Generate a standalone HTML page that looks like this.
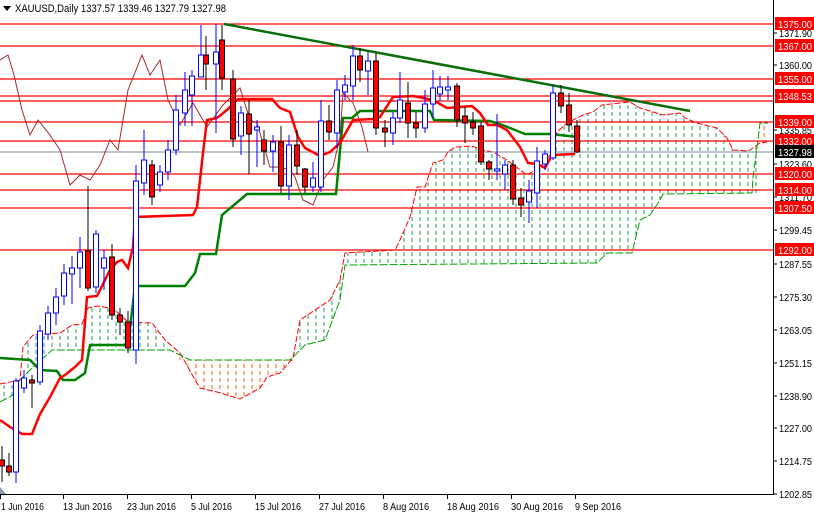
<!DOCTYPE html>
<html><head><meta charset="utf-8"><style>
html,body{margin:0;padding:0;background:#fff;}
svg{display:block;font-family:"Liberation Sans",sans-serif;}
.ax{font-size:10px;fill:#000;}
.lb{font-size:10px;fill:#fff;}
</style></head><body>
<svg width="814" height="514" viewBox="0 0 814 514" xmlns="http://www.w3.org/2000/svg">
<defs>
<pattern id="pg" width="8" height="7" patternUnits="userSpaceOnUse"><line x1="4" y1="0" x2="4" y2="4" stroke="#1fa050" stroke-width="1"/></pattern>
<pattern id="po" width="8" height="7" patternUnits="userSpaceOnUse"><line x1="4" y1="0" x2="4" y2="4" stroke="#ff6000" stroke-width="1"/></pattern>
</defs>
<rect width="814" height="514" fill="#fff"/>
<polygon fill="url(#pg)" points="0,384 20,380 23,347 33,335 60,333 72,325 82,324 88,308 97,306 110,308 115,310 128,322 152,323 165,345 170,350 52,350 30,370 20,380 13,395 0,402"/>
<polygon fill="url(#po)" points="175,360 180,353 195,380 200,388 217,392 240,399 260,388 267,377 280,373 290,362 295,360"/>
<polygon fill="url(#pg)" points="293,358 300,320 330,300 340,280 345,253 395,250 400,240 410,217 417,187 425,187 433,163 443,160 448,152 455,147 472,146 483,150 493,152 507,160 527,175 540,167 550,155 557,132 567,123 583,115 593,112 602,105 620,103 630,102 640,108 653,112 663,115 680,113 685,118 697,123 717,128 727,138 733,150 748,151 753,148 760,143 760,193 663,194 660,200 650,215 640,220 632,253 607,253 597,263 345,265 340,300 325,340 305,345"/>
<polygon fill="url(#po)" points="760,123 768,123 768,142 760,143"/>
<polyline fill="none" stroke="#f00" stroke-width="1" points="0,384 20,380 23,347 33,335 60,333 72,325 82,324 88,308 97,306 110,308 115,310 128,322 152,323 165,340 180,353 195,380 200,388 217,392 240,399 260,388 267,377 280,373 293,358 300,320 330,300 340,280 345,253 395,250 400,240 410,217 417,187 425,187 433,163 443,160 448,152 455,147 472,146 483,150 493,152 507,160 527,175 540,167 550,155 557,132 567,123 583,115 593,112 602,105 620,103 630,102 640,108 653,112 663,115 680,113 685,118 697,123 717,128 727,138 733,150 748,151 753,148 760,143 767,142" stroke-dasharray="6,2"/>
<polyline fill="none" stroke="#00a000" stroke-width="1" points="0,402 13,395 20,380 30,370 52,350 170,350 190,360 290,360 305,345 325,340 340,300 345,265 597,263 607,253 632,253 640,220 650,215 660,200 663,194 752,193 753,177 758,140 760,123 768,123" stroke-dasharray="8,2"/>
<g stroke="#f00" stroke-width="1.3">
<line x1="0" y1="24" x2="773" y2="24"/><line x1="0" y1="46" x2="773" y2="46"/><line x1="0" y1="79" x2="773" y2="79"/>
<line x1="0" y1="96" x2="773" y2="96"/><line x1="0" y1="101" x2="773" y2="101"/><line x1="0" y1="122" x2="773" y2="122"/>
<line x1="0" y1="141" x2="773" y2="141"/><line x1="0" y1="174" x2="773" y2="174"/><line x1="0" y1="190" x2="773" y2="190"/>
<line x1="0" y1="208" x2="773" y2="208"/><line x1="0" y1="250" x2="773" y2="250"/>
</g>
<line x1="0" y1="152" x2="773" y2="152" stroke="#778899" stroke-width="1"/>
<polyline fill="none" stroke="#a52a2a" stroke-width="1" points="0,60 8,55 14,75 22,110 30,135 38,120 50,135 60,150 70,185 80,175 90,180 100,165 110,140 118,150 128,90 136,70 142,55 150,75 160,60 168,100 180,125 193,103 207,127 223,105 240,88 250,120 257,123 270,167 280,167 290,170 295,177 303,200 313,205 323,180 333,167 340,137 343,93 353,103 362,127 368,152"/>
<polyline fill="none" stroke="#008000" stroke-width="2.5" points="0,358 30,360 40,370 57,371 63,380 75,380 85,373 90,345 128,345 135,286 185,286 195,273 200,254 216,254 222,215 247,194 336,194 343,118 352,118 360,111 430,111 434,120 490,121 505,126 525,134 550,134 578,137"/>
<polyline fill="none" stroke="#f00" stroke-width="2.5" points="0,420 10,427 22,434 32,434 40,414 50,397 60,378 65,375 75,367 82,360 87,297 97,296 110,270 117,262 122,260 128,268 133,247 135,217 193,215 197,207 203,153 207,120 217,118 227,110 238,99 272,99 280,108 290,112 298,137 305,148 320,156 330,152 340,143 353,120 373,119 380,117 393,97 413,96 433,100 447,108 460,107 472,106 480,113 488,125 497,125 507,130 520,147 528,163 537,164 545,168 552,155 575,154"/>
<line x1="224" y1="24" x2="690" y2="111" stroke="#0a6e0a" stroke-width="2.5"/>
<g stroke-width="1">
<g stroke="#000">
<line x1="2" y1="446" x2="2" y2="482"/><line x1="9" y1="453" x2="9" y2="476"/><line x1="32" y1="375" x2="32" y2="408"/><line x1="88" y1="186" x2="88" y2="291"/><line x1="112" y1="244" x2="112" y2="320"/><line x1="120" y1="308" x2="120" y2="335"/><line x1="128" y1="311" x2="128" y2="353"/><line x1="152" y1="160" x2="152" y2="205"/><line x1="206" y1="36" x2="206" y2="90"/><line x1="222" y1="25" x2="222" y2="90"/><line x1="233" y1="70" x2="233" y2="147"/><line x1="249" y1="100" x2="249" y2="174"/><line x1="264" y1="130" x2="264" y2="165"/><line x1="281" y1="126" x2="281" y2="193"/><line x1="297" y1="130" x2="297" y2="175"/><line x1="305" y1="168" x2="305" y2="193"/><line x1="329" y1="105" x2="329" y2="140"/><line x1="360" y1="48" x2="360" y2="82"/><line x1="376" y1="53" x2="376" y2="135"/><line x1="385" y1="120" x2="385" y2="147"/><line x1="408" y1="82" x2="408" y2="138"/><line x1="416" y1="112" x2="416" y2="138"/><line x1="457" y1="83" x2="457" y2="127"/><line x1="465" y1="107" x2="465" y2="143"/><line x1="473" y1="112" x2="473" y2="135"/><line x1="481" y1="122" x2="481" y2="165"/><line x1="489" y1="160" x2="489" y2="180"/><line x1="513" y1="160" x2="513" y2="205"/><line x1="521" y1="188" x2="521" y2="217"/><line x1="561" y1="85" x2="561" y2="113"/><line x1="569" y1="93" x2="569" y2="132"/><line x1="577" y1="120" x2="577" y2="153"/>
</g>
<g fill="#f00" stroke="#000">
<rect x="-0.5" y="460" width="5" height="6"/><rect x="6.5" y="466" width="5" height="6"/><rect x="29.5" y="380" width="5" height="3"/><rect x="85.5" y="251" width="5" height="37"/><rect x="109.5" y="257" width="5" height="58"/><rect x="117.5" y="315" width="5" height="7"/><rect x="125.5" y="322" width="5" height="26"/><rect x="149.5" y="165" width="5" height="32"/><rect x="203.5" y="55" width="5" height="9"/><rect x="219.5" y="40" width="5" height="38"/><rect x="230.5" y="79" width="5" height="60"/><rect x="246.5" y="114" width="5" height="20"/><rect x="261.5" y="140" width="5" height="11"/><rect x="278.5" y="142" width="5" height="44"/><rect x="294.5" y="145" width="5" height="21"/><rect x="302.5" y="169" width="5" height="18"/><rect x="326.5" y="121" width="5" height="11"/><rect x="357.5" y="56" width="5" height="14"/><rect x="373.5" y="61" width="5" height="67"/><rect x="382.5" y="128" width="5" height="4"/><rect x="405.5" y="103" width="5" height="20"/><rect x="413.5" y="123" width="5" height="5"/><rect x="454.5" y="86" width="5" height="34"/><rect x="462.5" y="116" width="5" height="7"/><rect x="470.5" y="122" width="5" height="6"/><rect x="478.5" y="126" width="5" height="36"/><rect x="486.5" y="162" width="5" height="7"/><rect x="510.5" y="165" width="5" height="34"/><rect x="518.5" y="198" width="5" height="7"/><rect x="558.5" y="93" width="5" height="13"/><rect x="566.5" y="105" width="5" height="20"/><rect x="574.5" y="126" width="5" height="26"/>
</g>
<g stroke="#00f">
<line x1="16" y1="378" x2="16" y2="483"/><line x1="24" y1="370" x2="24" y2="393"/><line x1="40" y1="325" x2="40" y2="385"/><line x1="48" y1="306" x2="48" y2="340"/><line x1="56" y1="288" x2="56" y2="325"/><line x1="64" y1="264" x2="64" y2="305"/><line x1="72" y1="256" x2="72" y2="304"/><line x1="80" y1="237" x2="80" y2="288"/><line x1="96" y1="230" x2="96" y2="293"/><line x1="104" y1="250" x2="104" y2="290"/><line x1="136" y1="165" x2="136" y2="364"/><line x1="144" y1="130" x2="144" y2="195"/><line x1="160" y1="165" x2="160" y2="192"/><line x1="168" y1="140" x2="168" y2="180"/><line x1="176" y1="95" x2="176" y2="155"/><line x1="185" y1="72" x2="185" y2="126"/><line x1="192" y1="70" x2="192" y2="126"/><line x1="201" y1="25" x2="201" y2="77"/><line x1="216" y1="24" x2="216" y2="133"/><line x1="241" y1="106" x2="241" y2="155"/><line x1="257" y1="120" x2="257" y2="167"/><line x1="273" y1="135" x2="273" y2="172"/><line x1="289" y1="135" x2="289" y2="200"/><line x1="313" y1="162" x2="313" y2="192"/><line x1="321" y1="100" x2="321" y2="192"/><line x1="337" y1="80" x2="337" y2="148"/><line x1="345" y1="75" x2="345" y2="100"/><line x1="353" y1="45" x2="353" y2="100"/><line x1="368" y1="52" x2="368" y2="95"/><line x1="393" y1="112" x2="393" y2="145"/><line x1="400" y1="72" x2="400" y2="123"/><line x1="425" y1="90" x2="425" y2="133"/><line x1="433" y1="70" x2="433" y2="118"/><line x1="440" y1="76" x2="440" y2="101"/><line x1="448" y1="76" x2="448" y2="100"/><line x1="497" y1="114" x2="497" y2="180"/><line x1="505" y1="160" x2="505" y2="190"/><line x1="529" y1="180" x2="529" y2="223"/><line x1="537" y1="147" x2="537" y2="208"/><line x1="545" y1="150" x2="545" y2="170"/><line x1="553" y1="85" x2="553" y2="160"/>
</g>
<g fill="#fff" stroke="#00f">
<rect x="13.5" y="381" width="5" height="91"/><rect x="21.5" y="378" width="5" height="10"/><rect x="37.5" y="331" width="5" height="51"/><rect x="45.5" y="313" width="5" height="21"/><rect x="53.5" y="297" width="5" height="16"/><rect x="61.5" y="273" width="5" height="23"/><rect x="69.5" y="268" width="5" height="6"/><rect x="77.5" y="252" width="5" height="16"/><rect x="93.5" y="234" width="5" height="53"/><rect x="101.5" y="258" width="5" height="10"/><rect x="133.5" y="181" width="5" height="169"/><rect x="141.5" y="160" width="5" height="23"/><rect x="157.5" y="172" width="5" height="13"/><rect x="165.5" y="150" width="5" height="22"/><rect x="173.5" y="110" width="5" height="40"/><rect x="182.5" y="90" width="5" height="23"/><rect x="189.5" y="76" width="5" height="19"/><rect x="198.5" y="55" width="5" height="22"/><rect x="213.5" y="52" width="5" height="12"/><rect x="238.5" y="113" width="5" height="23"/><rect x="254.5" y="127" width="5" height="3"/><rect x="270.5" y="142" width="5" height="9"/><rect x="286.5" y="145" width="5" height="41"/><rect x="310.5" y="178" width="5" height="9"/><rect x="318.5" y="121" width="5" height="66"/><rect x="334.5" y="90" width="5" height="43"/><rect x="342.5" y="85" width="5" height="7"/><rect x="350.5" y="56" width="5" height="30"/><rect x="365.5" y="61" width="5" height="10"/><rect x="390.5" y="118" width="5" height="15"/><rect x="397.5" y="100" width="5" height="18"/><rect x="422.5" y="104" width="5" height="24"/><rect x="430.5" y="88" width="5" height="16"/><rect x="437.5" y="87" width="5" height="7"/><rect x="445.5" y="87" width="5" height="3"/><rect x="494.5" y="169" width="5" height="2"/><rect x="502.5" y="165" width="5" height="9"/><rect x="526.5" y="191" width="5" height="11"/><rect x="534.5" y="161" width="5" height="32"/><rect x="542.5" y="154" width="5" height="10"/><rect x="550.5" y="93" width="5" height="65"/>
</g>
</g>
<polygon points="3,6 11,6 7,11" fill="#000"/>
<text x="15" y="12" font-size="11" fill="#000" textLength="211" lengthAdjust="spacingAndGlyphs">XAUUSD,Daily  1337.57 1339.46 1327.79 1327.98</text>
<rect x="774" y="0" width="40" height="514" fill="#fff"/>
<rect x="0" y="495" width="814" height="19" fill="#fff"/>
<line x1="773.5" y1="0" x2="773.5" y2="495" stroke="#000"/>
<line x1="0" y1="494.5" x2="774" y2="494.5" stroke="#000"/>
<g class="ax" lengthAdjust="spacingAndGlyphs">
<text x="779" y="37" textLength="33" lengthAdjust="spacingAndGlyphs">1371.90</text><text x="779" y="69" textLength="33" lengthAdjust="spacingAndGlyphs">1360.00</text><text x="779" y="134" textLength="33" lengthAdjust="spacingAndGlyphs">1335.85</text><text x="779" y="168" textLength="33" lengthAdjust="spacingAndGlyphs">1323.60</text><text x="779" y="201" textLength="33" lengthAdjust="spacingAndGlyphs">1311.70</text><text x="779" y="234" textLength="33" lengthAdjust="spacingAndGlyphs">1299.45</text><text x="779" y="268" textLength="33" lengthAdjust="spacingAndGlyphs">1287.55</text><text x="779" y="301" textLength="33" lengthAdjust="spacingAndGlyphs">1275.30</text><text x="779" y="334" textLength="33" lengthAdjust="spacingAndGlyphs">1263.05</text><text x="779" y="367" textLength="33" lengthAdjust="spacingAndGlyphs">1251.15</text><text x="779" y="400" textLength="33" lengthAdjust="spacingAndGlyphs">1238.90</text><text x="779" y="432" textLength="33" lengthAdjust="spacingAndGlyphs">1227.00</text><text x="779" y="465" textLength="33" lengthAdjust="spacingAndGlyphs">1214.75</text><text x="779" y="498" textLength="33" lengthAdjust="spacingAndGlyphs">1202.85</text>
</g>
<g fill="#f00">
<rect x="775" y="17" width="39" height="13"/><rect x="775" y="39" width="39" height="13"/><rect x="775" y="72" width="39" height="13"/><rect x="775" y="89" width="39" height="14"/><rect x="775" y="115" width="39" height="13"/><rect x="775" y="134" width="39" height="13"/><rect x="775" y="167" width="39" height="13"/><rect x="775" y="183" width="39" height="13"/><rect x="775" y="201" width="39" height="13"/><rect x="775" y="243" width="39" height="13"/>
</g>
<rect x="775" y="145" width="39" height="13" fill="#000"/>
<g class="lb">
<text x="778" y="28" textLength="34" lengthAdjust="spacingAndGlyphs">1375.00</text><text x="778" y="50" textLength="34" lengthAdjust="spacingAndGlyphs">1367.00</text><text x="778" y="83" textLength="34" lengthAdjust="spacingAndGlyphs">1355.00</text><text x="778" y="100" textLength="34" lengthAdjust="spacingAndGlyphs">1348.53</text><text x="778" y="126" textLength="34" lengthAdjust="spacingAndGlyphs">1339.00</text><text x="778" y="145" textLength="34" lengthAdjust="spacingAndGlyphs">1332.00</text><text x="778" y="156" textLength="34" lengthAdjust="spacingAndGlyphs">1327.98</text><text x="778" y="178" textLength="34" lengthAdjust="spacingAndGlyphs">1320.00</text><text x="778" y="194" textLength="34" lengthAdjust="spacingAndGlyphs">1314.00</text><text x="778" y="212" textLength="34" lengthAdjust="spacingAndGlyphs">1307.50</text><text x="778" y="254" textLength="34" lengthAdjust="spacingAndGlyphs">1292.00</text>
</g>
<g stroke="#000"><line x1="774" y1="33" x2="777" y2="33"/><line x1="774" y1="65" x2="777" y2="65"/><line x1="774" y1="130" x2="777" y2="130"/><line x1="774" y1="164" x2="777" y2="164"/><line x1="774" y1="197" x2="777" y2="197"/><line x1="774" y1="230" x2="777" y2="230"/><line x1="774" y1="264" x2="777" y2="264"/><line x1="774" y1="297" x2="777" y2="297"/><line x1="774" y1="330" x2="777" y2="330"/><line x1="774" y1="363" x2="777" y2="363"/><line x1="774" y1="396" x2="777" y2="396"/><line x1="774" y1="428" x2="777" y2="428"/><line x1="774" y1="461" x2="777" y2="461"/><line x1="774" y1="494" x2="777" y2="494"/></g>
<g class="ax">
<text x="1" y="510" textLength="43" lengthAdjust="spacingAndGlyphs">1 Jun 2016</text><text x="63" y="510" textLength="49" lengthAdjust="spacingAndGlyphs">13 Jun 2016</text><text x="127" y="510" textLength="49" lengthAdjust="spacingAndGlyphs">23 Jun 2016</text><text x="191" y="510" textLength="41" lengthAdjust="spacingAndGlyphs">5 Jul 2016</text><text x="255" y="510" textLength="46" lengthAdjust="spacingAndGlyphs">15 Jul 2016</text><text x="319" y="510" textLength="46" lengthAdjust="spacingAndGlyphs">27 Jul 2016</text><text x="383" y="510" textLength="46" lengthAdjust="spacingAndGlyphs">8 Aug 2016</text><text x="447" y="510" textLength="52" lengthAdjust="spacingAndGlyphs">18 Aug 2016</text><text x="511" y="510" textLength="52" lengthAdjust="spacingAndGlyphs">30 Aug 2016</text><text x="575" y="510" textLength="46" lengthAdjust="spacingAndGlyphs">9 Sep 2016</text>
</g>
<g stroke="#000"><line x1="0.5" y1="495" x2="0.5" y2="499"/><line x1="63.5" y1="495" x2="63.5" y2="499"/><line x1="127.5" y1="495" x2="127.5" y2="499"/><line x1="191.5" y1="495" x2="191.5" y2="499"/><line x1="255.5" y1="495" x2="255.5" y2="499"/><line x1="319.5" y1="495" x2="319.5" y2="499"/><line x1="383.5" y1="495" x2="383.5" y2="499"/><line x1="447.5" y1="495" x2="447.5" y2="499"/><line x1="511.5" y1="495" x2="511.5" y2="499"/><line x1="575.5" y1="495" x2="575.5" y2="499"/></g>
<polygon points="0,487 0,494 6,494" fill="#8899aa"/>
</svg>
</body></html>
